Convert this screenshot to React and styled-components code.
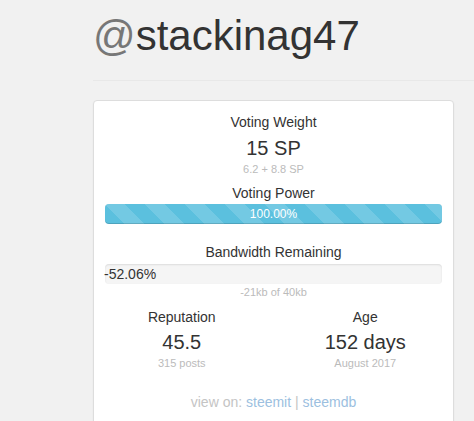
import React from "react";
import styled, { createGlobalStyle } from "styled-components";

const Global = createGlobalStyle`
  html, body { margin: 0; padding: 0; background: #f1f1f1; }
  body { font-family: "Liberation Sans", Arial, sans-serif; font-size: 14px; line-height: 1.42857; color: #333; }
`;

const Page = styled.div`
  padding-left: 93px;
  overflow: hidden;
  height: 421px;
`;

const Title = styled.h1`
  margin: 13px 0 0 0;
  font-size: 42px;
  font-weight: 400;
  line-height: 1.1;
  color: #333;
  white-space: nowrap;
`;

const At = styled.span`
  color: #777;
`;

const Rule = styled.hr`
  margin: 21px 0 19px 0;
  border: 0;
  border-top: 1px solid #e8e8e8;
  width: 400px;
`;

const Card = styled.div`
  width: 337px;
  background: #fff;
  border: 1px solid #ddd;
  border-radius: 4px;
  box-shadow: 0 1px 2px rgba(0, 0, 0, 0.06);
  padding: 11px 11px 0 11px;
  text-align: center;
`;

const Label = styled.div`
  font-size: 14px;
  color: #333;
  line-height: 20px;
`;

const Big = styled.div`
  margin-top: ${(p) => (p.$tight ? 2 : 3)}px;
  font-size: 20px;
  line-height: 26px;
  color: #333;
`;

const Muted = styled.div`
  font-size: 11px;
  line-height: 16px;
  color: #bbb;
`;

const Stat = styled.div`
  padding-top: ${(p) => p.$top || 0}px;
`;

const Progress = styled.div`
  margin-top: ${(p) => p.$gap || 0}px;
  height: 20px;
  border-radius: 4px;
  background: #f5f5f5;
  box-shadow: inset 0 1px 2px rgba(0, 0, 0, 0.1);
  position: relative;
  text-align: ${(p) => (p.$left ? "left" : "center")};
`;

const Bar = styled.div`
  height: 20px;
  border-radius: 4px;
  background-color: #5bc0de;
  background-image: linear-gradient(
    45deg,
    rgba(255, 255, 255, 0.15) 25%,
    transparent 25%,
    transparent 50%,
    rgba(255, 255, 255, 0.15) 50%,
    rgba(255, 255, 255, 0.15) 75%,
    transparent 75%,
    transparent
  );
  background-size: 40px 40px;
  box-shadow: inset 0 -1px 0 rgba(0, 0, 0, 0.15);
  color: #fff;
  font-size: 12px;
  line-height: 20px;
  text-align: center;
`;

const OverText = styled.div`
  font-size: 14px;
  line-height: 20px;
  color: #333;
  margin-left: -1px;
`;

const Row = styled.div`
  display: grid;
  grid-template-columns: 1fr 1fr;
  margin: 7px -15px 0 -15px;
`;

const Footer = styled.div`
  padding: 21px 0 14px 0;
  font-size: 14px;
  line-height: 20px;
  color: #c4c4c4;
`;

const Link = styled.a`
  color: #9cbfe0;
  text-decoration: none;
`;

export default function App() {
  return (
    <>
      <Global />
      <Page>
        <Title>
          <At>@</At>stackinag47
        </Title>
        <Rule />
        <Card>
          <Stat>
            <Label>Voting Weight</Label>
            <Big>15 SP</Big>
            <Muted>6.2 + 8.8 SP</Muted>
          </Stat>
          <Stat $top={6}>
            <Label>Voting Power</Label>
            <Progress $gap={1}>
              <Bar style={{ width: "100%" }}>100.00%</Bar>
            </Progress>
          </Stat>
          <Stat $top={18}>
            <Label>Bandwidth Remaining</Label>
            <Progress $left $gap={2}>
              <OverText>-52.06%</OverText>
            </Progress>
            <Muted>-21kb of 40kb</Muted>
          </Stat>
          <Row>
            <Stat>
              <Label>Reputation</Label>
              <Big $tight>45.5</Big>
              <Muted>315 posts</Muted>
            </Stat>
            <Stat>
              <Label>Age</Label>
              <Big $tight>152 days</Big>
              <Muted>August 2017</Muted>
            </Stat>
          </Row>
          <Footer>
            view on: <Link href="#">steemit</Link> | <Link href="#">steemdb</Link>
          </Footer>
        </Card>
      </Page>
    </>
  );
}
